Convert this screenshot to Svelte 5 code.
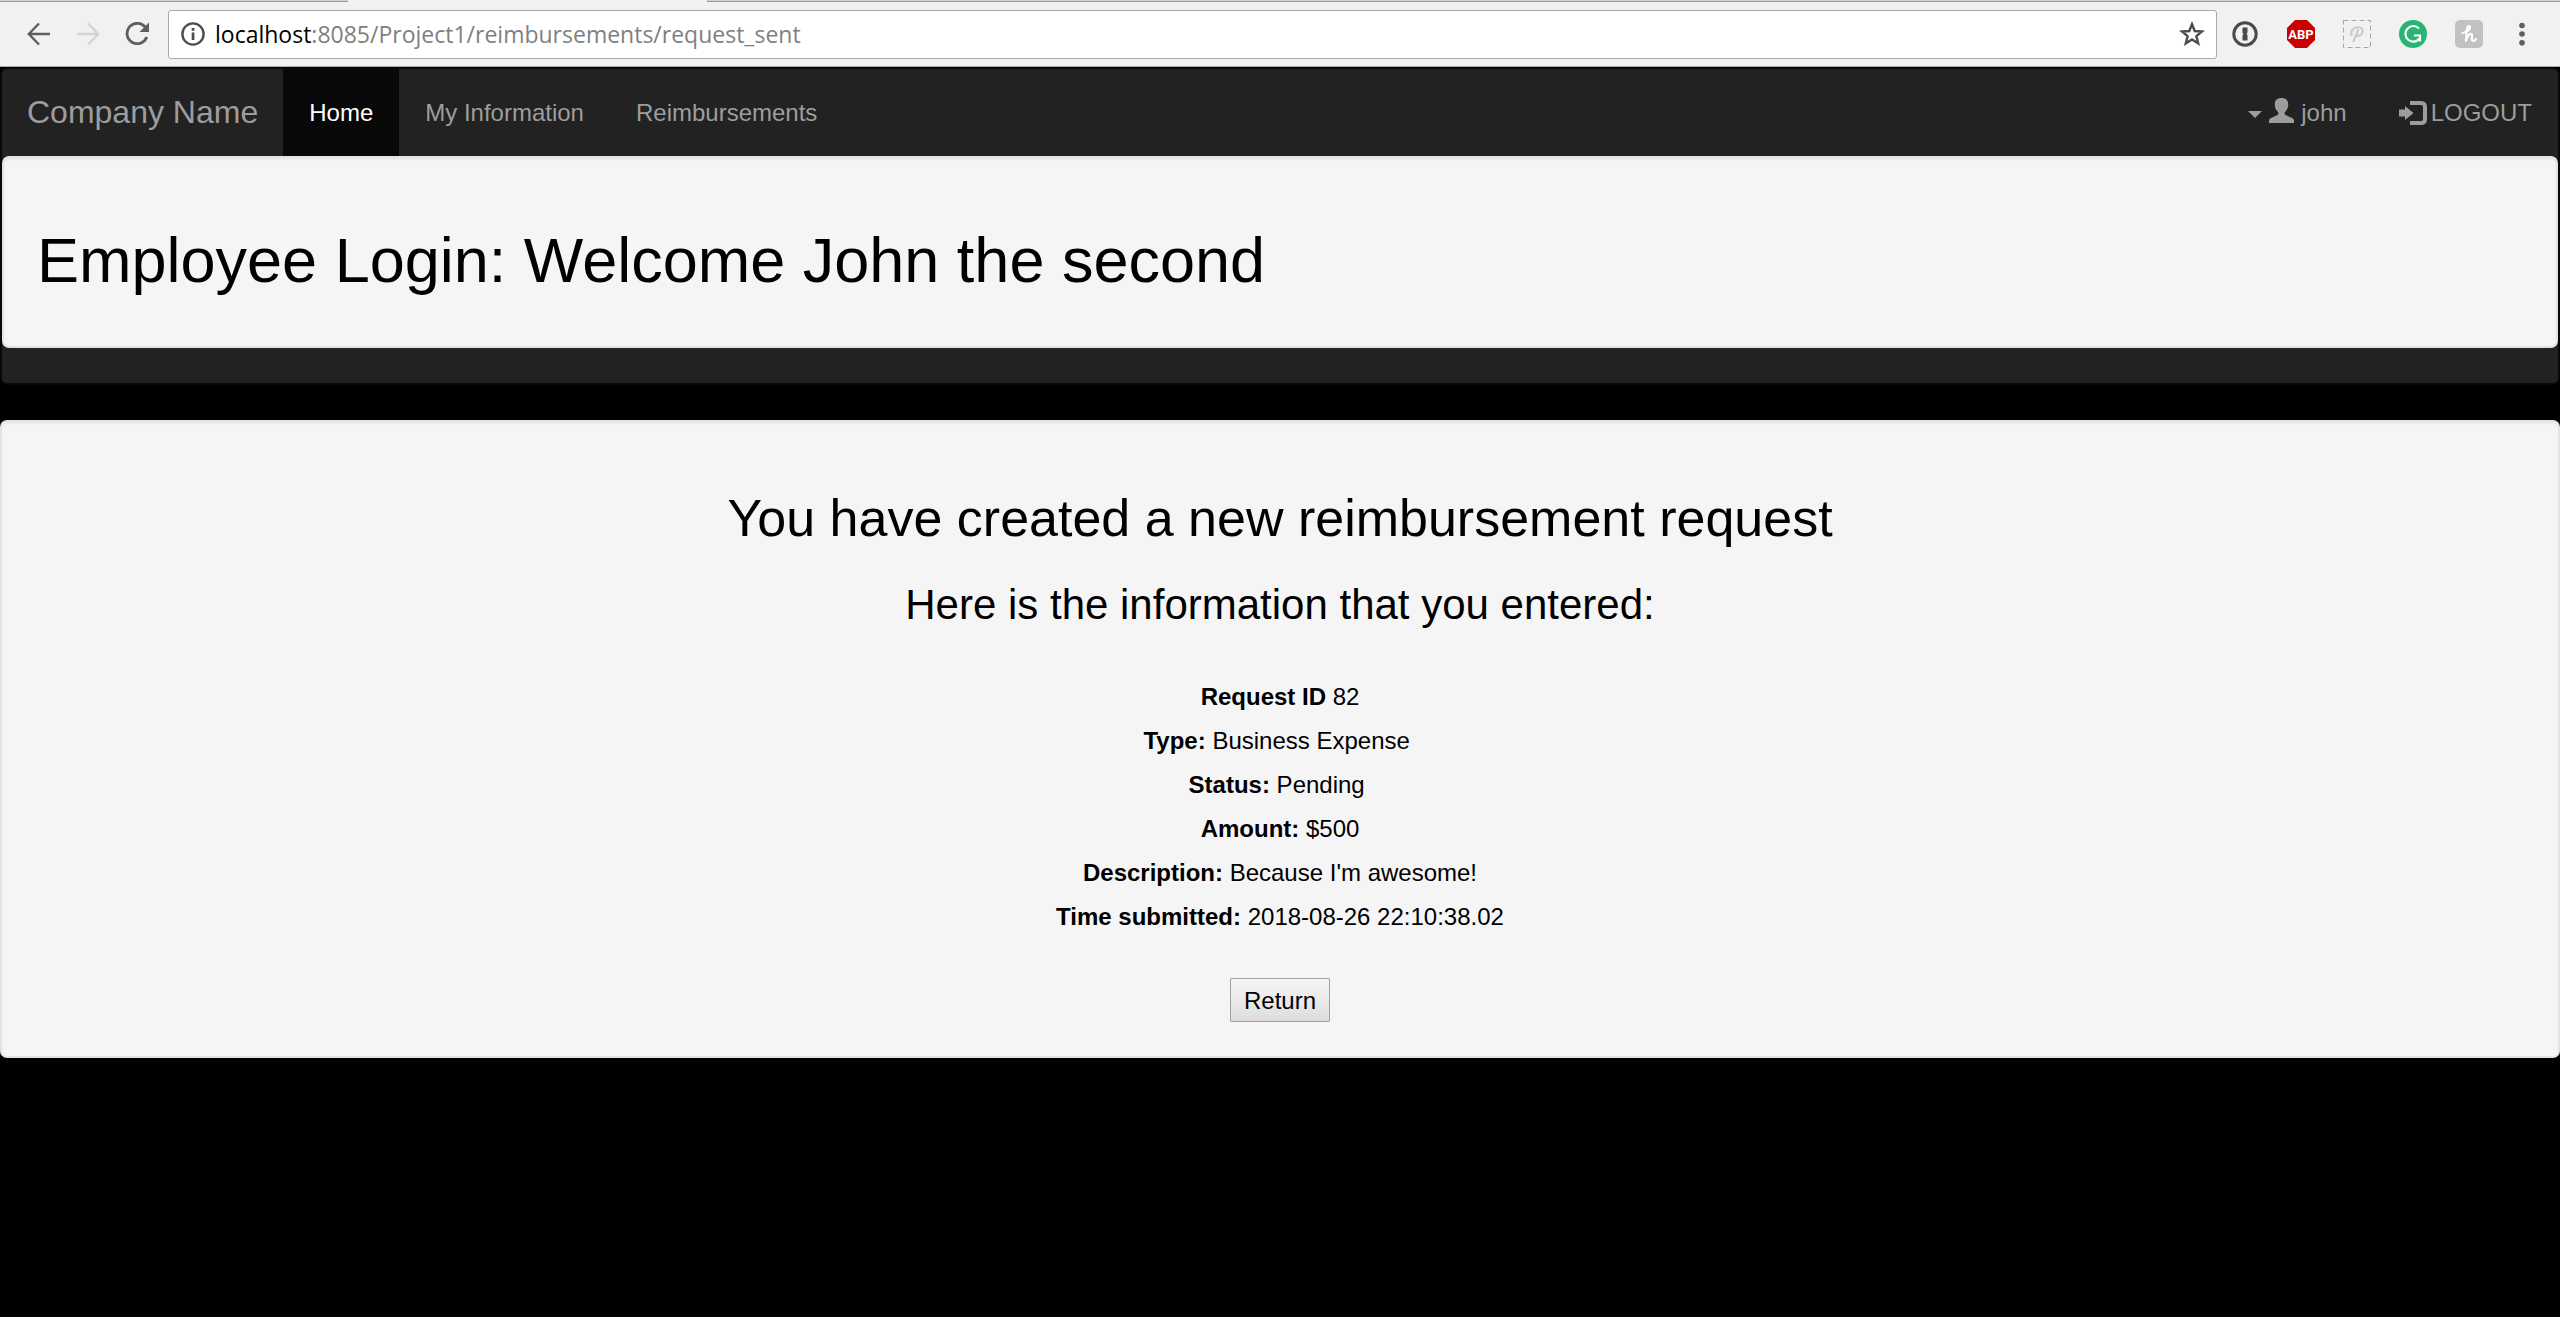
<script>
  const navItems = [
    { label: 'Home', active: true },
    { label: 'My Information', active: false },
    { label: 'Reimbursements', active: false }
  ];

  const details = [
    { term: 'Request ID', value: '82' },
    { term: 'Type:', value: 'Business Expense\u00a0' },
    { term: 'Status:', value: 'Pending\u00a0' },
    { term: 'Amount:', value: '$500' },
    { term: 'Description:', value: "Because I'm awesome!" },
    { term: 'Time submitted:', value: '2018-08-26 22:10:38.02' }
  ];
</script>

<div class="browser">
  <div class="tabstrip"><span class="tab before"></span><span class="tab current"></span><span class="tab after"></span></div>
  <div class="toolbar">
    <div class="history">
      <button aria-label="Back">
        <svg width="24" height="24" viewBox="0 0 24 24" fill="none" stroke="#5a5f64" stroke-width="2.4"><path d="M23 12H2.500M12 1.500L1.800 12L12 22.500" /></svg>
      </button>
      <button aria-label="Forward">
        <svg width="24" height="24" viewBox="0 0 24 24" fill="none" stroke="#d3d4d5" stroke-width="2.400"><path d="M1 12H21.500M12 1.500L22.200 12L12 22.500" /></svg>
      </button>
      <button aria-label="Reload">
        <svg width="24" height="24" viewBox="0 0 24 24" fill="none"><path d="M20.300 5.200A10.200 10.200 0 1 0 21.800 15" stroke="#5a5f64" stroke-width="2.800" /><path d="M24 .5V10H14.500Z" fill="#5a5f64" /></svg>
      </button>
    </div>
    <div class="omnibox">
      <svg width="24" height="24" viewBox="0 0 24 24"><circle cx="12" cy="12" r="10.600" fill="none" stroke="#4d4d4d" stroke-width="2.400" /><path d="M10.700 10.500h2.700v7.500h-2.700zM10.700 6h2.700v2.700h-2.700z" fill="#4d4d4d" /></svg>
      <span class="url" role="textbox" tabindex="0" aria-label="Address"><b>localhost</b>:8085/Project1/reimbursements/request_sent</span>
      <button aria-label="Bookmark this page">
        <svg width="26" height="26" viewBox="0 0 26 26"><path d="M13 3.200L15.700 10L23 10.500L17.400 15.200L19.200 22.400L13 18.400L6.800 22.400L8.600 15.200L3 10.500L10.300 10Z" fill="none" stroke="#4d4d4d" stroke-width="2.400" /></svg>
      </button>
    </div>
    <div class="extensions">
      <button aria-label="Password manager">
        <svg width="28" height="28" viewBox="0 0 28 28"><circle cx="14" cy="14" r="11.200" fill="none" stroke="#4a4a4a" stroke-width="3" /><path d="M11.500 7.500h5v5l-1 1.500l1 1v5.500h-5v-5l1-1.500l-1-1z" fill="#4a4a4a" /></svg>
      </button>
      <button aria-label="Ad blocker">
        <svg width="28" height="28" viewBox="0 0 28 28"><path d="M8 0h12l8 8v12l-8 8H8l-8-8V8z" fill="#c80000" /><text x="14" y="19" text-anchor="middle" class="abp">ABP</text></svg>
      </button>
      <button aria-label="Pin">
        <svg width="28" height="28" viewBox="0 0 28 28" fill="none"><rect x=".5" y=".5" width="27" height="27" stroke="#a5a5a5" stroke-dasharray="5 3" /><path d="M8.500 15C7 9 13 6.500 17 7.500C22 9 19.500 16 14 16M15 10C14 14 12.500 17 10.500 21" stroke="#cbcbcb" stroke-width="2.200" stroke-linecap="round" /></svg>
      </button>
      <button aria-label="Grammar checker">
        <svg width="28" height="28" viewBox="0 0 28 28" fill="none"><circle cx="14" cy="14" r="14" fill="#27b671" /><path d="M20 8.500A7.800 7.800 0 1 0 20.500 18.500M15 15.500H21V21.500" stroke="#fff" stroke-width="2.200" /></svg>
      </button>
      <button aria-label="Coupons">
        <svg width="28" height="28" viewBox="0 0 28 28" fill="none"><rect width="28" height="28" rx="5" fill="#c1c1c1" /><path d="M7.500 13C11 12.500 15.500 10 15 7C14.500 5 12 6 11.800 10L11 21C12.500 16 14.500 13.500 16.500 14C18.500 14.500 15.500 19.500 17.500 20.700C19 21.500 20.500 20 21 19" stroke="#fff" stroke-width="2.200" stroke-linecap="round" stroke-linejoin="round" /></svg>
      </button>
      <button aria-label="Menu">
        <svg width="22" height="28" viewBox="3 0 22 28" fill="#5a5f64"><circle cx="14" cy="5.500" r="2.800" /><circle cx="14" cy="14" r="2.800" /><circle cx="14" cy="22.700" r="2.800" /></svg>
      </button>
    </div>
  </div>
</div>

<header class="navbar">
  <nav>
    <a class="brand" href="#home">Company Name</a>
    {#each navItems as item}
      <a class="item" class:active={item.active} href="#{item.label}">{item.label}</a>
    {/each}
    <a class="item user" href="#account">
      <svg class="caret" width="14" height="7" viewBox="0 0 14 7"><path d="M0 0H14L7 7Z" fill="currentColor" /></svg>
      <svg class="person" width="25" height="25" viewBox="0 0 25 25" fill="currentColor"><path d="M12.500 0C17 0 19.500 2.500 19.200 7C19 10 18 12 16 14C15.300 15 15.500 16.300 16.500 16.900L23 20C24.500 20.800 25 21.500 25 23V25H0V23C0 21.500.5 20.800 2 20L8.500 16.900C9.500 16.300 9.700 15 9 14C7 12 6 10 5.800 7C5.500 2.500 8 0 12.500 0Z" /></svg>
      john
    </a>
    <a class="item logout" href="#logout">
      <svg width="28" height="24" viewBox="0 0 28 24"><path d="M11 2H22Q26 2 26 6V18Q26 22 22 22H11" fill="none" stroke="currentColor" stroke-width="4" /><path d="M0 8.500H6V5L14.500 12L6 19V15.500H0Z" fill="currentColor" /></svg>
      LOGOUT
    </a>
  </nav>
  <div class="well">
    <h1>Employee Login: Welcome John the second</h1>
  </div>
</header>

<main class="well">
  <h2>You have created a new reimbursement request</h2>
  <h3>Here is the information that you entered:</h3>
  <div class="details">
    {#each details as row}
      <p><strong>{row.term}</strong> {row.value}</p>
    {/each}
  </div>
  <button class="return">Return</button>
</main>

<style>
  :global(body) {
    background: #000;
    color: #000;
    font-family: 'Liberation Sans', Arial, sans-serif;
    font-size: 24px;
    line-height: 35px;
  }
  h1, h2, h3, p { margin: 0; font-weight: 400; }
  button { font: inherit; color: inherit; }
  svg { display: block; flex: none; }

  .tabstrip { display: flex; height: 2px; }
  .tab { box-sizing: border-box; background: #d0d0d0; border-bottom: 1px solid #999; }
  .before { width: 348px; }
  .current { width: 359px; background: #f1f1f1; border: 0; }
  .after { flex: 1; }
  .toolbar {
    display: flex;
    align-items: center;
    height: 64px;
    background: #f1f1f1;
    border-bottom: 1px solid #a9a9a9;
  }
  .toolbar button { padding: 0; border: 0; background: none; }
  .history { display: flex; gap: 25px; padding: 0 19px 0 27px; }
  .omnibox {
    flex: 1;
    display: flex;
    align-items: center;
    gap: 10px;
    height: 47px;
    padding: 0 11px 0 12px;
    background: #fff;
    border: 1px solid #a9a9a9;
    border-radius: 3px;
  }
  .url { flex: 1; font-family: 'Open Sans', sans-serif; font-size: 23px; color: #808080; }
  .url b { font-weight: 400; color: #000; }
  .extensions { display: flex; gap: 28px; padding: 0 27px 0 14px; }
  .abp { font: bold 13px Roboto, sans-serif; fill: #fff; }

  .navbar {
    background: #222;
    border: 2px solid #080808;
    border-radius: 7px;
    padding-bottom: 35px;
    margin-bottom: 35px;
  }
  nav { display: flex; }
  nav a {
    display: flex;
    align-items: center;
    height: 87px;
    padding: 0 26px;
    color: #9d9d9d;
    text-decoration: none;
  }
  nav .brand { font-size: 32px; padding: 0 25px; }
  nav .active { color: #fff; background: #080808; }
  .user { margin-left: auto; gap: 7px; }
  .caret { margin-top: 4px; }
  .person { margin-bottom: 4px; }
  .logout { gap: 4px; }

  .well {
    padding: 68px 33px 34px;
    background: #f5f5f5;
    border: 2px solid #e3e3e3;
    border-radius: 7px;
    box-shadow: inset 0 2px 2px rgba(0, 0, 0, 0.05);
  }
  h1 { font-size: 63px; line-height: 69px; padding-bottom: 17px; }
  main { text-align: center; }
  h2 { font-size: 52px; line-height: 57px; }
  h3 { font-size: 42px; line-height: 46px; margin: 35px 0 51px; }
  .details { display: grid; gap: 9px; }
  .return {
    display: block;
    height: 44px;
    margin: 44px auto 0;
    padding: 0 13px;
    border: 1px solid #a0a0a0;
    border-radius: 1px;
    background: linear-gradient(#f6f6f6, #dddddd);
  }
</style>
